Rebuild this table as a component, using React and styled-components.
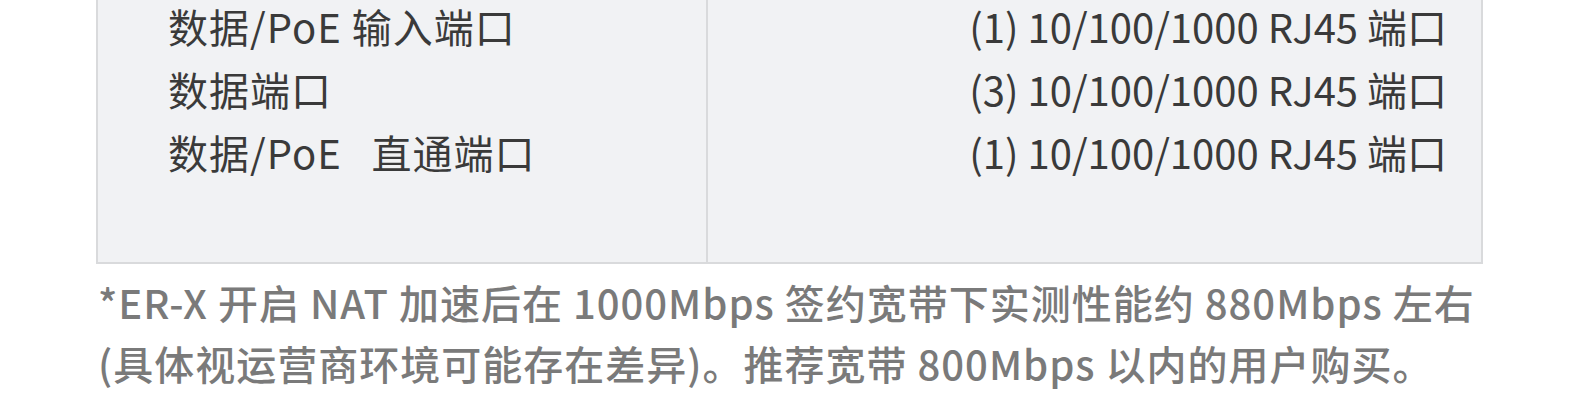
import styled, { createGlobalStyle } from 'styled-components'

const GlobalStyle = createGlobalStyle`
  html, body {
    margin: 0;
    padding: 0;
    background: #ffffff;
  }
  body {
    font-family: "Noto Sans CJK SC", "Noto Sans", sans-serif;
    overflow: hidden;
  }
`

const Page = styled.div`
  width: 1581px;
  height: 407px;
  padding-left: 96px;
  box-sizing: border-box;
  overflow: hidden;
`

const SpecTable = styled.div`
  width: 1387px;
  margin-top: -5px;
  box-sizing: border-box;
  display: grid;
  grid-template-columns: 608px 1fr;
  background: #f1f2f4;
  border: 2px solid #d9dadc;
  border-top: none;
`

const Column = styled.div`
  display: flex;
  flex-direction: column;
  padding: ${(p) => (p.$right ? '0 34px 78px 0' : '0 0 78px 70px')};
  align-items: ${(p) => (p.$right ? 'flex-end' : 'flex-start')};
  border-left: ${(p) => (p.$right ? '2px solid #d9dadc' : 'none')};
`

const Cell = styled.div`
  height: 63px;
  line-height: 63px;
  font-size: 40px;
  color: #3a3a3a;
  white-space: pre;
  letter-spacing: ${(p) => (p.$spaced ? '1px' : '0')};
`

const Note = styled.p`
  margin: 8px 0 0 2px;
  font-size: 40px;
  line-height: 61px;
  font-weight: 500;
  color: #7a7a7a;
  letter-spacing: 1px;
  white-space: nowrap;
`

const rows = [
  ['数据/PoE 输入端口', '(1) 10/100/1000 RJ45 端口'],
  ['数据端口', '(3) 10/100/1000 RJ45 端口'],
  ['数据/PoE   直通端口', '(1) 10/100/1000 RJ45 端口'],
]

export default function App() {
  return (
    <>
      <GlobalStyle />
      <Page>
        <SpecTable>
          <Column>
            {rows.map((r, i) => (
              <Cell key={i} $spaced>{r[0]}</Cell>
            ))}
          </Column>
          <Column $right>
            {rows.map((r, i) => (
              <Cell key={i}>{r[1]}</Cell>
            ))}
          </Column>
        </SpecTable>
        <Note>
          *ER-X 开启 NAT 加速后在 1000Mbps 签约宽带下实测性能约 880Mbps 左右
          <br />
          (具体视运营商环境可能存在差异)。推荐宽带 800Mbps 以内的用户购买。
        </Note>
      </Page>
    </>
  )
}
